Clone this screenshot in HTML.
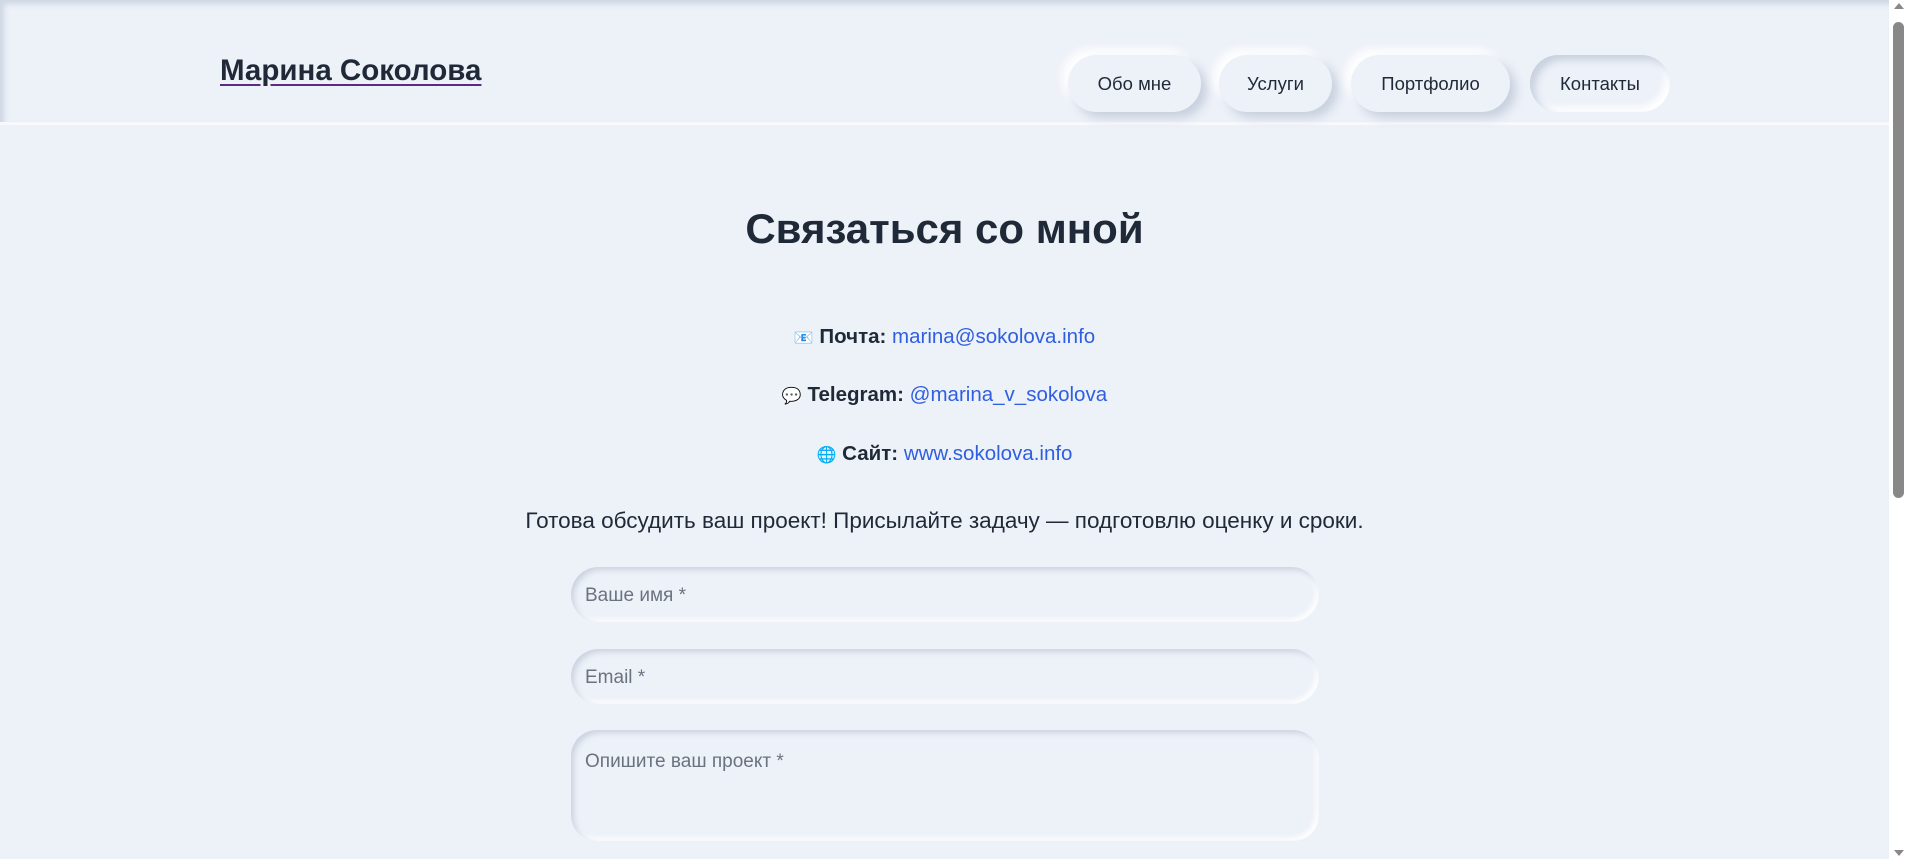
<!DOCTYPE html>
<html><head><meta charset="utf-8"><style>
html,body{margin:0;padding:0;}
body{width:1908px;height:859px;overflow:hidden;background:#edf1f8;font-family:"Liberation Sans","DejaVu Sans",sans-serif;color:#1f2937;position:relative;}
.page{position:absolute;left:0;top:0;width:1889px;height:859px;background:#edf1f8;}
header{position:absolute;left:0;top:0;width:1889px;height:122px;box-shadow:inset 4px 4px 6px #cfd6e4;border-bottom:3px solid #f8f9fc;}
.logo{position:absolute;left:220px;top:54px;font-size:29.5px;font-weight:bold;color:#1f2937;text-decoration:underline;text-decoration-color:#5b2a86;text-underline-offset:4px;}
.nav a{position:absolute;top:55px;height:57px;line-height:57px;border-radius:29px;text-align:center;font-size:18.5px;color:#1f2937;text-decoration:none;background:#edf1f8;box-shadow:6px 6px 10px #c8d0de,-6px -6px 10px #ffffff;}
.nav a.act{box-shadow:inset 5px 5px 8px #c8d0de,inset -5px -5px 8px #ffffff;}
h1{position:absolute;left:0;width:1889px;top:205px;margin:0;text-align:center;font-size:42px;font-weight:bold;color:#1f2937;}
.c{position:absolute;left:0;width:1889px;text-align:center;font-size:20.5px;}
.c b{font-weight:bold;}
.c a{color:#2f5fe0;text-decoration:none;}
.inp{position:absolute;left:571px;width:748px;background:#edf1f8;box-shadow:inset 3px 3px 6px #cbd3e0,inset -3px -3px 6px #ffffff;font-size:19px;color:#6b7280;box-sizing:border-box;padding-left:14px;}
.sb{position:absolute;left:1889px;top:0;width:19px;height:859px;background:#fff;}
.th{position:absolute;left:4px;top:22px;width:11px;height:476px;border-radius:6px;background:#888;}
</style></head><body>
<div class="page">
<header>
<div class="logo">Марина Соколова</div>
<div class="nav">
<a style="left:1068px;width:133px">Обо мне</a>
<a style="left:1219px;width:113px">Услуги</a>
<a style="left:1351px;width:159px">Портфолио</a>
<a class="act" style="left:1530px;width:140px">Контакты</a>
</div>
</header>
<h1>Связаться со мной</h1>
<div class="c" style="top:325px"><span style="font-size:16px">📧</span> <b>Почта:</b> <a>marina@sokolova.info</a></div>
<div class="c" style="top:383px"><span style="font-size:16px">💬</span> <b>Telegram:</b> <a>@marina_v_sokolova</a></div>
<div class="c" style="top:442px"><span style="font-size:16px">🌐</span> <b>Сайт:</b> <a>www.sokolova.info</a></div>
<div class="c" style="top:508px;font-size:22.5px">Готова обсудить ваш проект! Присылайте задачу — подготовлю оценку и сроки.</div>
<div class="inp" style="top:567px;height:55px;border-radius:28px;line-height:58px">Ваше имя *</div>
<div class="inp" style="top:649px;height:55px;border-radius:28px;line-height:58px">Email *</div>
<div class="inp" style="top:730px;height:111px;border-radius:26px;padding-top:21px">Опишите ваш проект *</div>
</div>
<div class="sb"><div style="position:absolute;left:5px;top:3px;border:5px solid transparent;border-bottom:6px solid #888;border-top:0"></div><div class="th"></div><div style="position:absolute;left:5px;bottom:3px;border:5px solid transparent;border-top:6px solid #888;border-bottom:0"></div></div>
</body></html>
